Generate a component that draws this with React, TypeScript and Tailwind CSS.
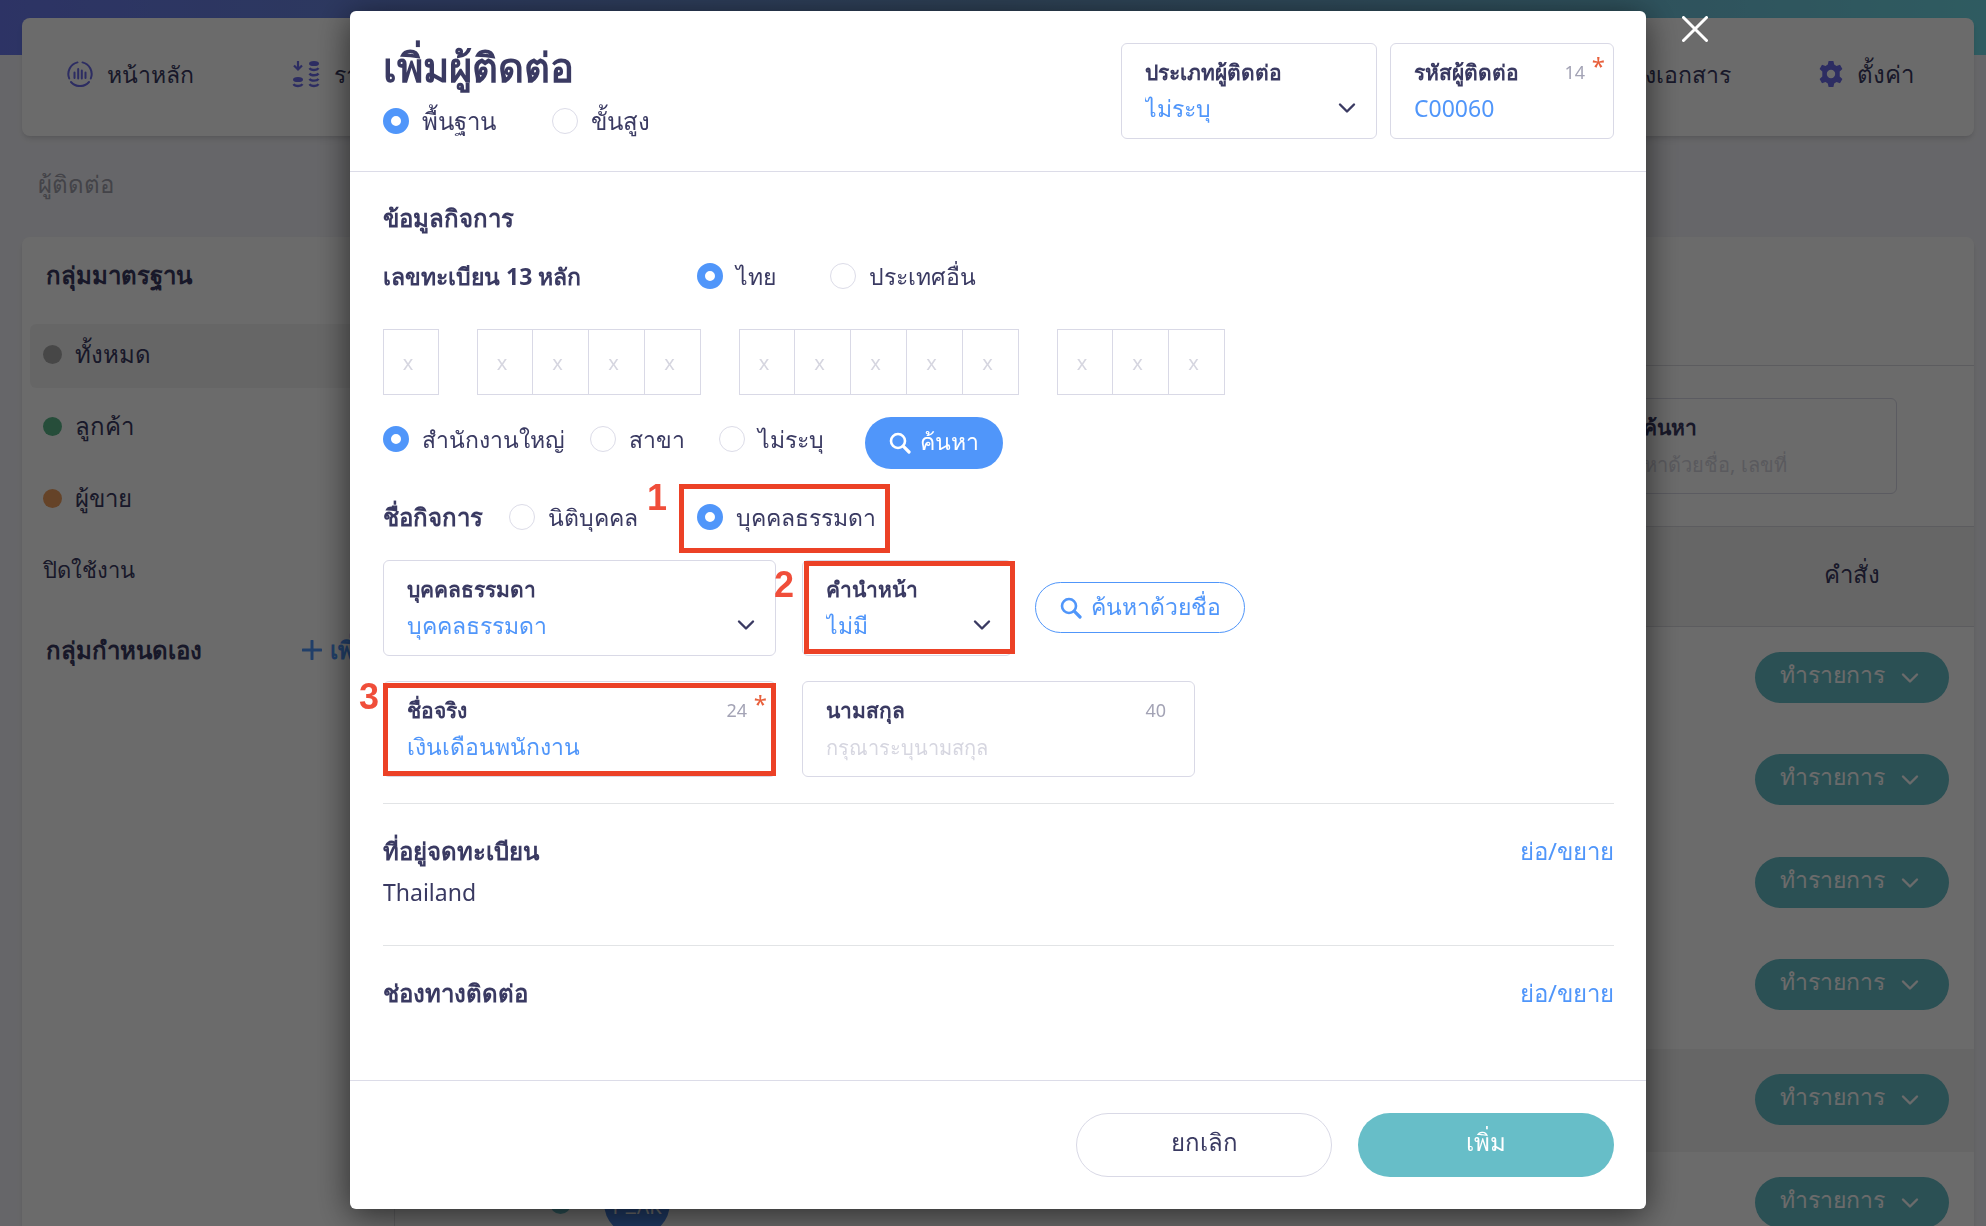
import type { ReactNode } from "react";

function Chevron({ className = "" }: { className?: string }) {
  return (
    <svg viewBox="0 0 18 12" fill="none" stroke="currentColor" strokeWidth="2.4" strokeLinecap="round" strokeLinejoin="round" className={`h-3 w-[18px] ${className}`} aria-hidden="true">
      <path d="M2 2.5 9 9.5 16 2.5" />
    </svg>
  );
}

function SearchIcon() {
  return (
    <svg viewBox="0 0 22 22" fill="none" stroke="currentColor" strokeWidth="2.6" strokeLinecap="round" className="size-[22px]" aria-hidden="true">
      <circle cx="9" cy="9" r="7" />
      <path d="M14.2 14.2 20 20" strokeWidth="3.2" />
    </svg>
  );
}

function HomeIcon() {
  return (
    <svg viewBox="0 0 26 26" fill="none" stroke="currentColor" strokeWidth="2" strokeLinecap="round" className="size-[26px]" aria-hidden="true">
      <path d="M10.5 1.4A12 12 0 0 0 2.2 17.5M15.5 1.4A12 12 0 0 1 23.8 17.5M4 21a12 12 0 0 0 18 0" />
      <path d="M7.5 11.5V17M11.2 8v9.500M14.8 9.500V17.500M18.500 11.500V17" />
    </svg>
  );
}

function IncomeIcon() {
  return (
    <svg viewBox="0 0 28 28" fill="none" stroke="currentColor" className="size-7" aria-hidden="true">
      <path d="M6 1v8M2 5.500 6 9.500l4-4" strokeWidth="2.200" />
      <ellipse cx="6" cy="19.500" rx="5" ry="2.600" fill="currentColor" stroke="none" />
      <ellipse cx="22" cy="3.500" rx="5" ry="2.600" fill="currentColor" stroke="none" />
      <path d="M1.500 24.200c1.500 2.400 7.500 2.400 9 0M17.500 8.200c1.500 2.400 7.500 2.400 9 0M17.500 13.500c1.500 2.400 7.500 2.400 9 0M17.500 18.800c1.500 2.400 7.500 2.400 9 0M17.500 24.200c1.500 2.400 7.500 2.400 9 0" strokeWidth="2.400" />
    </svg>
  );
}

function GearIcon() {
  return (
    <svg viewBox="0 0 24 26" className="h-[26px] w-6" fill="currentColor" fillRule="evenodd" aria-hidden="true">
      <path d="M9.600 0h4.800l.8 3.600 2.300 1.300 3.500-1.200L23.400 8l-2.700 2.500v5L23.400 18 21 22.300l-3.500-1.200-2.300 1.300-.8 3.600H9.600l-.8-3.600-2.300-1.300L3 22.300.6 18l2.700-2.500v-5L.6 8 3 3.700l3.500 1.200 2.300-1.300ZM12 8.800a4.200 4.200 0 1 0 0 8.400 4.200 4.200 0 0 0 0-8.400Z" />
    </svg>
  );
}

function Radio({ name, label, checked = false, className = "" }: { name: string; label: string; checked?: boolean; className?: string }) {
  return (
    <label className={`flex items-center gap-[13px] whitespace-nowrap ${className}`}>
      <input
        type="radio"
        name={name}
        defaultChecked={checked}
        className="size-[26px] shrink-0 appearance-none rounded-full border border-[#dcdce8] bg-white checked:border-8 checked:border-[#5096fa]"
      />
      <span>{label}</span>
    </label>
  );
}

function Field({ id, label, count, required, className = "", children }: { id: string; label: string; count?: string; required?: boolean; className?: string; children: ReactNode }) {
  return (
    <div className={`relative h-24 rounded-md border border-[#d9d9e6] px-[23px] pt-2.5 ${className}`}>
      <div className="flex h-9 items-center justify-between">
        <label htmlFor={id} className="text-[21px] leading-9 font-bold whitespace-nowrap">{label}</label>
        {count && <span className="mr-[5px] text-lg text-[#a3a3b5]">{count}</span>}
      </div>
      {required && <span className="absolute top-2 right-2 text-2xl leading-7 text-[#e8603c]">*</span>}
      {children}
    </div>
  );
}

function SelectField({ id, label, value, className = "" }: { id: string; label: string; value: string; className?: string }) {
  return (
    <Field id={id} label={label} className={className}>
      <div className="relative">
        <select id={id} className="h-9 w-full appearance-none bg-transparent text-[23px] leading-9 text-[#5096fa]">
          <option>{value}</option>
        </select>
        <Chevron className="pointer-events-none absolute top-3 right-[-3px]" />
      </div>
    </Field>
  );
}

function TextField({ id, label, value, placeholder, count, required, className = "" }: { id: string; label: string; value?: string; placeholder?: string; count?: string; required?: boolean; className?: string }) {
  return (
    <Field id={id} label={label} count={count} required={required} className={className}>
      <input
        id={id}
        type="text"
        defaultValue={value}
        placeholder={placeholder}
        className="h-9 w-full bg-transparent text-[23px] leading-9 text-[#5096fa] placeholder:text-xl placeholder:text-[#d6d6e0]"
      />
    </Field>
  );
}

function Section({ title, children }: { title: string; children?: ReactNode }) {
  return (
    <section className="border-t border-[#e2e4e6] pt-[29px] pb-[35px]">
      <div className="flex h-9 items-center justify-between">
        <h3 className="text-2xl leading-9 font-bold">{title}</h3>
        <button type="button" className="text-2xl leading-9 text-[#5096fa]">ย่อ/ขยาย</button>
      </div>
      {children}
    </section>
  );
}

function ActionButton() {
  return (
    <button type="button" className="flex h-[51px] w-[194px] items-center gap-4 rounded-full bg-[#67bec8] pb-1.5 pl-[25px] text-white">
      ทำรายการ
      <Chevron className="mt-1.5" />
    </button>
  );
}

const digitGroups = [1, 4, 5, 3];

const contactRows = [
  { height: "h-[102px]", shade: "" },
  { height: "h-[103px]", shade: "" },
  { height: "h-[102px]", shade: "" },
  { height: "h-[115px]", shade: "" },
  { height: "h-[103px]", shade: "bg-[#f3f3f3]" },
  { height: "h-[103px]", shade: "" },
];

const navLink = "flex items-center gap-[14px] whitespace-nowrap";
const groupItem = "flex h-16 items-center gap-[13px] rounded-md pb-1 pl-[13px]";

function ContactsPage() {
  return (
    <div className="h-screen overflow-hidden bg-[#f4f4f9] text-[23px]">
      <div className="h-[55px] bg-linear-to-r from-[#6b7bf0] via-[#6c98c8] to-[#70dae6]" />
      <nav className="relative mx-[22px] mr-3 -mt-[37px] flex h-[118px] items-center justify-between rounded-lg bg-white pr-[60px] pb-1.5 pl-[45px] shadow-md">
        <div className="flex gap-[98px]">
          <a href="#home" className={navLink}><span className="text-[#6b6bea]"><HomeIcon /></span>หน้าหลัก</a>
          <a href="#income" className={navLink}><span className="text-[#6b6bea]"><IncomeIcon /></span>รายรับ</a>
        </div>
        <div className="flex gap-[88px]">
          <a href="#documents" className={navLink}>คลังเอกสาร</a>
          <a href="#settings" className={`${navLink} text-2xl`}><span className="text-[#6b6bea]"><GearIcon /></span>ตั้งค่า</a>
        </div>
      </nav>
      <p className="ml-[38px] flex h-[101px] items-center pb-1.5 text-2xl text-[#a0a0ac]">ผู้ติดต่อ</p>
      <div className="mr-3 ml-[22px] flex rounded-t-lg bg-white shadow-md">
        <aside className="w-[372px] shrink-0 pt-5 pl-2">
          <h2 className="pl-4 text-2xl leading-9 font-bold">กลุ่มมาตรฐาน</h2>
          <ul className="mt-[31px] text-2xl">
            <li className={`${groupItem} bg-[#f4f4f4]`}><i className="size-[19px] rounded-full bg-[#aaaaaa]" />ทั้งหมด</li>
            <li className={`${groupItem} mt-2`}><i className="size-[19px] rounded-full bg-[#5cb88a]" />ลูกค้า</li>
            <li className={`${groupItem} mt-2`}><i className="size-[19px] rounded-full bg-[#f0a060]" />ผู้ขาย</li>
            <li className={`${groupItem} mt-2 text-[22px]`}>ปิดใช้งาน</li>
          </ul>
          <div className="mt-7 flex items-center justify-between pr-6 pl-4 text-2xl leading-9 font-bold">
            <h2>กลุ่มกำหนดเอง</h2>
            <button type="button" className="flex items-center gap-2 text-[#5096fa]">
              <svg viewBox="0 0 20 20" className="size-5" stroke="currentColor" strokeWidth="3" strokeLinecap="round" aria-hidden="true"><path d="M10 1v18M1 10h18" /></svg>
              เพิ่ม
            </button>
          </div>
        </aside>
        <div className="min-w-0 flex-1 border-l border-[#e0e0e4]">
          <div className="h-32" />
          <div className="flex h-[161px] justify-end border-t border-[#dcdce2] pt-8 pr-[77px]">
            <TextField id="search" label="คำค้นหา" placeholder="ค้นหาด้วยชื่อ, เลขที่" className="w-[304px]" />
          </div>
          <table className="w-full">
            <thead>
              <tr className="h-[100px] border-y border-[#dcdce2] bg-[#f4f4f4]">
                <th />
                <th className="w-[244px] pb-1.5 text-2xl font-normal">คำสั่ง</th>
              </tr>
            </thead>
            <tbody>
              {contactRows.map((row, i) => (
                <tr key={i} className={`${row.height} ${row.shade}`}>
                  <td className="pl-[155px] align-top">
                    <div className="flex h-[102px] items-center gap-[33px]">
                      <i className="size-[21px] rounded-full bg-[#67bec8]" />
                      <span className="flex size-[66px] items-center justify-center rounded-full bg-[#4a86e8] pt-2 text-xl text-white">PΞΛK</span>
                    </div>
                  </td>
                  <td className="pt-[25px] pl-[25px] align-top"><ActionButton /></td>
                </tr>
              ))}
            </tbody>
          </table>
        </div>
      </div>
    </div>
  );
}

const marker = "pointer-events-none absolute border-[5px] border-[#ec4126]";
const markerNumber = "pointer-events-none absolute font-['Liberation_Sans',sans-serif] text-4xl leading-9 font-bold text-[#f04e3a]";

function ContactDialog() {
  return (
    <div role="dialog" aria-modal="true" aria-labelledby="dialog-title" className="relative w-full max-w-[1296px] rounded-md bg-white text-[23px] leading-9 shadow-[0_6px_34px_rgba(0,0,0,0.6)]">
      <button type="button" aria-label="ปิด" className="absolute top-[5px] left-full ml-9 text-white">
        <svg viewBox="0 0 26 26" className="size-[26px]" stroke="currentColor" strokeWidth="3" strokeLinecap="round" aria-hidden="true"><path d="M1.500 1.500 24.500 24.500M24.500 1.500 1.500 24.500" /></svg>
      </button>
      <header className="flex justify-between border-b border-[#dcdce8] py-8 pr-8 pl-[33px]">
        <div>
          <h1 id="dialog-title" className="text-[40px] leading-[48px] font-bold">เพิ่มผู้ติดต่อ</h1>
          <div className="mt-3 flex text-2xl leading-9">
            <Radio name="mode" label="พื้นฐาน" checked className="w-[169px]" />
            <Radio name="mode" label="ขั้นสูง" />
          </div>
        </div>
        <div className="flex gap-[13px]">
          <SelectField id="type" label="ประเภทผู้ติดต่อ" value="ไม่ระบุ" className="w-64" />
          <TextField id="code" label="รหัสผู้ติดต่อ" value="C00060" count="14" required className="w-56" />
        </div>
      </header>
      <div className="pt-7 pr-8 pl-[33px]">
        <h2 className="text-2xl leading-9 font-bold">ข้อมูลกิจการ</h2>
        <div className="mt-[22px] flex">
          <h3 className="w-[314px] font-bold">เลขทะเบียน 13 หลัก</h3>
          <Radio name="country" label="ไทย" checked className="w-[133px]" />
          <Radio name="country" label="ประเทศอื่น" />
        </div>
        <div className="mt-[35px] flex gap-[38px]">
          {digitGroups.map((size, g) => (
            <div key={g} className="flex">
              {Array.from({ length: size }, (_, i) => (
                <input key={i} type="text" aria-label={`เลขทะเบียน ${g + 1}-${i + 1}`} placeholder="x" maxLength={1} className="h-[66px] w-14 border-y border-r border-[#d9d9e6] pr-1.5 text-center text-xl first:border-l placeholder:text-[#d6d6e0]" />
              ))}
            </div>
          ))}
        </div>
        <div className="mt-[22px] flex items-start">
          <Radio name="branch" label="สำนักงานใหญ่" checked className="h-11 w-[207px]" />
          <Radio name="branch" label="สาขา" className="h-11 w-[129px]" />
          <Radio name="branch" label="ไม่ระบุ" className="h-11 w-[146px]" />
          <button type="button" className="flex h-[52px] w-[138px] items-center justify-center gap-[9px] rounded-full bg-[#5096fa] text-white">
            <SearchIcon />
            <span className="pb-1">ค้นหา</span>
          </button>
        </div>
        <div className="relative mt-[15px] flex h-[66px] items-center">
          <h3 className="w-[126px] text-2xl leading-9 font-bold">ชื่อกิจการ</h3>
          <Radio name="entity" label="นิติบุคคล" className="w-[188px]" />
          <Radio name="entity" label="บุคคลธรรมดา" checked />
          <span className={`${marker} top-0 left-[296px] h-[69px] w-[211px]`} />
          <span className={`${markerNumber} -top-1 left-[264px]`}>1</span>
        </div>
        <div className="relative mt-[10px] flex">
          <SelectField id="entity-type" label="บุคคลธรรมดา" value="บุคคลธรรมดา" className="mr-[26px] w-[393px]" />
          <SelectField id="prefix" label="คำนำหน้า" value="ไม่มี" className="w-[210px]" />
          <button type="button" className="mt-[22px] ml-[23px] flex h-[51px] w-[210px] items-center justify-center gap-[9px] rounded-full border border-[#5096fa] text-[#5096fa]">
            <SearchIcon />
            <span className="pb-1">ค้นหาด้วยชื่อ</span>
          </button>
          <span className={`${marker} top-px left-[421px] h-[93px] w-[211px]`} />
          <span className={`${markerNumber} top-[7px] left-[391px]`}>2</span>
        </div>
        <div className="relative mt-[25px] mb-[26px] flex gap-[26px]">
          <TextField id="first-name" label="ชื่อจริง" value="เงินเดือนพนักงาน" count="24" required className="w-[393px]" />
          <TextField id="last-name" label="นามสกุล" placeholder="กรุณาระบุนามสกุล" count="40" className="w-[393px]" />
          <span className={`${marker} top-[2px] left-0 h-[93px] w-[393px]`} />
          <span className={`${markerNumber} -top-0.5 -left-6`}>3</span>
        </div>
        <Section title="ที่อยู่จดทะเบียน">
          <p className="mt-[5px]">Thailand</p>
        </Section>
        <Section title="ช่องทางติดต่อ" />
      </div>
      <footer className="mt-[34px] flex justify-end gap-[26px] border-t border-[#dcdce8] px-8 py-8 text-2xl">
        <button type="button" className="h-16 w-64 rounded-full border border-[#d9d9e6] pb-1.5">ยกเลิก</button>
        <button type="button" className="h-16 w-64 rounded-full bg-[#67bec8] pb-1.5 text-white">เพิ่ม</button>
      </footer>
    </div>
  );
}

export default function App() {
  return (
    <div className="font-['Noto_Sans','Open_Sans',sans-serif] text-[#3a3a62]">
      <ContactsPage />
      <div className="fixed inset-0 flex items-start justify-center overflow-hidden bg-black/58 pt-[11px] pl-[10px]">
        <ContactDialog />
      </div>
    </div>
  );
}
